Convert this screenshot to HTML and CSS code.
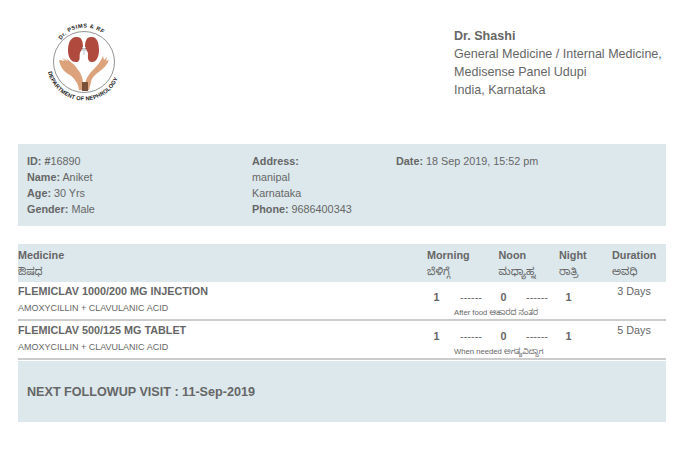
FILE: index.html
```html
<!DOCTYPE html>
<html lang="en">
<head>
<meta charset="utf-8">
<title>Prescription</title>
<link rel="stylesheet" href="styles.css">
</head>
<body>
<header class="top">
  <svg class="logo" width="80" height="80" viewBox="-4 0 80 80" aria-label="Department of Nephrology logo">
    <defs>
      <path id="arcTop" d="M11 18 A29 29 0 0 1 58 17"/>
      <path id="arcBottom" d="M-2 50 A37 37 0 0 0 70 50"/>
    </defs>
    <circle cx="34" cy="40" r="30.5" fill="#fff" stroke="#666" stroke-width=".7"/>
    <path d="M27 15 C21 14 18 21 18 28 C18 35 21 41 27 40 C31 39 29 34 30 31 C31 28 33 28 33 25 C33 20 32 15 27 15Z" fill="#b04a3f"/>
    <path d="M41 15 C47 14 49 21 49 28 C49 35 46 41 41 40 C37 39 38 34 38 31 C37 28 35 28 35 25 C35 20 36 15 41 15Z" fill="#b04a3f"/>
    <path d="M32 25 L34 27 L36 25 M31 28 L37 28 M34 27 L34 33" fill="none" stroke="#b9c6d2" stroke-width="1"/>
    <path d="M9 38 L15 39 L12 36 L18 39 L16 36 L22 41 C25 43 27 47 29 49 C31 52 33 56 33 62 L33 68 L29 68 C28 61 25 57 20 53 C15 51 10 45 9 38Z" fill="#dca27c"/>
    <path d="M53 34 L54 38 L57 35 L56 39 L59 38 C57 43 54 46 50 49 C46 52 42 55 41 60 L39 68 L36 68 L35 62 C36 56 39 52 42 49 C46 45 50 41 53 34Z" fill="#dca27c"/>
    <rect x="32" y="60" width="6" height="9" fill="#7a5138"/>
    <text class="logo-text"><textPath href="#arcTop" textLength="47">Dr. PSIMS &amp; RF</textPath></text>
    <text class="logo-text"><textPath href="#arcBottom" textLength="92">DEPARTMENT OF NEPHROLOGY</textPath></text>
  </svg>
  <div class="doctor">
    <strong>Dr. Shashi</strong><br>
    General Medicine / Internal Medicine,<br>
    Medisense Panel Udupi<br>
    India, Karnataka
  </div>
</header>

<section class="patient">
  <div class="col-a">
    <div><b>ID: #</b>16890</div>
    <div><b>Name:</b> Aniket</div>
    <div><b>Age:</b> 30 Yrs</div>
    <div><b>Gender:</b> Male</div>
  </div>
  <div class="col-b">
    <div><b>Address:</b></div>
    <div>manipal</div>
    <div>Karnataka</div>
    <div><b>Phone:</b> 9686400343</div>
  </div>
  <div class="col-c"><b>Date:</b> 18 Sep 2019, 15:52 pm</div>
</section>

<section class="meds">
  <div class="row head">
    <div class="name"><b>Medicine</b><span class="kn">ಔಷಧ</span></div>
    <div class="morning"><b>Morning</b><span class="kn">ಬೆಳಿಗ್ಗೆ</span></div>
    <div class="noon"><b>Noon</b><span class="kn">ಮಧ್ಯಾಹ್ನ</span></div>
    <div class="night"><b>Night</b><span class="kn">ರಾತ್ರಿ</span></div>
    <div class="duration"><b>Duration</b><span class="kn">ಅವಧಿ</span></div>
  </div>
  <div class="row item">
    <div class="name"><b class="drug">FLEMICLAV 1000/200 MG INJECTION</b><span class="generic">AMOXYCILLIN + CLAVULANIC ACID</span></div>
    <div class="dose">
      <div class="dose-line"><b>1</b><i>------</i><b>0</b><i>------</i><b>1</b></div>
      <div class="note">After food ಆಹಾರದ ನಂತರ</div>
    </div>
    <div class="days">3 Days</div>
  </div>
  <div class="row item">
    <div class="name"><b class="drug">FLEMICLAV 500/125 MG TABLET</b><span class="generic">AMOXYCILLIN + CLAVULANIC ACID</span></div>
    <div class="dose">
      <div class="dose-line"><b>1</b><i>------</i><b>0</b><i>------</i><b>1</b></div>
      <div class="note">When needed ಅಗತ್ಯವಿದ್ದಾಗ</div>
    </div>
    <div class="days">5 Days</div>
  </div>
</section>

<section class="followup">NEXT FOLLOWUP VISIT : 11-Sep-2019</section>
</body>
</html>
```
FILE: styles.css
```css
* { box-sizing: border-box; }
html, body { margin: 0; background: #fff; }
body {
  width: 684px;
  height: 476px;
  overflow: hidden;
  padding: 22px 18px 0;
  font-family: "Liberation Sans", Arial, "Noto Sans Kannada", "Noto Sans", sans-serif;
  color: #666;
  font-size: 10.8px;
}
b, strong { font-weight: 700; }
i { font-style: normal; }

.top { display: flex; height: 122px; }
.logo { margin-left: 28px; flex: none; overflow: visible; }
.logo-text { font: 700 5.6px "Liberation Sans", sans-serif; fill: #222; }
.doctor {
  margin-left: 328px;
  margin-top: 5px;
  font-size: 12.55px;
  line-height: 18px;
  white-space: nowrap;
}

.patient {
  display: flex;
  height: 82px;
  padding: 9px 9px 0;
  background: #dce8ec;
  line-height: 16px;
}
.col-a { width: 225px; }
.col-b { width: 144px; }

.meds { margin-top: 18px; }
.row { display: flex; }
.head {
  height: 38px;
  padding-top: 3px;
  background: #dce8ec;
  line-height: 16px;
}
.head > div { display: flex; flex-direction: column; }
.kn { font-size: 10.5px; }
.head .name { width: 409px; }
.morning { width: 71.5px; }
.noon { width: 60.5px; }
.night { width: 53px; }

.item {
  height: 39px;
  border-bottom: 2px solid #ccc;
}
.item .name { width: 400px; display: flex; flex-direction: column; padding-top: 1px; }
.drug { line-height: 16px; }
.generic { font-size: 9px; line-height: 14px; margin-top: 2px; }
.dose { width: 184px; padding-top: 7px; }
.dose-line {
  display: grid;
  grid-template-columns: 15px 52px 15px 50px 15px;
  justify-items: center;
  margin-left: 11px;
  line-height: 16px;
}
.dose-line i { font-size: 11px; padding-left: 2px; }
.note { font-size: 7.7px; line-height: 10px; margin-top: 3px; margin-left: 36px; white-space: nowrap; }
.days { width: 64px; text-align: center; padding-top: 2px; line-height: 14px; font-size: 10.8px; }

.followup {
  margin-top: 1px;
  height: 61px;
  background: #dce8ec;
  padding-left: 9px;
  display: flex;
  align-items: center;
  font-size: 12.6px;
  font-weight: 700;
}
```
